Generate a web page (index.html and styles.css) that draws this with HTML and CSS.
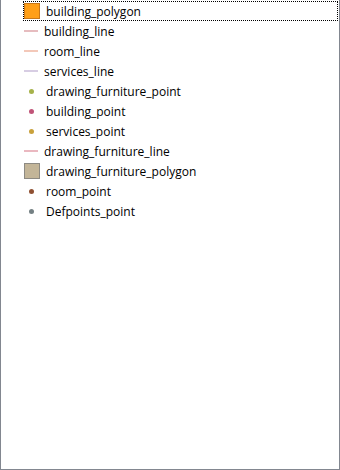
FILE: index.html
```html
<!DOCTYPE html>
<html>
<head>
<meta charset="utf-8">
<link rel="stylesheet" href="styles.css">
</head>
<body>
<div class="panel">
  <ul class="legend">
    <li class="row selected"><span class="icon"><span class="poly poly-building"></span></span><span class="label">building_polygon</span></li>
    <li class="row"><span class="icon line-icon"><span class="line line-building"></span></span><span class="label">building_line</span></li>
    <li class="row"><span class="icon line-icon"><span class="line line-room"></span></span><span class="label">room_line</span></li>
    <li class="row"><span class="icon line-icon"><span class="line line-services"></span></span><span class="label">services_line</span></li>
    <li class="row"><span class="icon"><span class="dot dot-furniture"></span></span><span class="label">drawing_furniture_point</span></li>
    <li class="row"><span class="icon"><span class="dot dot-building"></span></span><span class="label">building_point</span></li>
    <li class="row"><span class="icon"><span class="dot dot-services"></span></span><span class="label">services_point</span></li>
    <li class="row"><span class="icon line-icon"><span class="line line-furniture"></span></span><span class="label">drawing_furniture_line</span></li>
    <li class="row"><span class="icon"><span class="poly poly-furniture"></span></span><span class="label">drawing_furniture_polygon</span></li>
    <li class="row"><span class="icon"><span class="dot dot-room"></span></span><span class="label">room_point</span></li>
    <li class="row"><span class="icon"><span class="dot dot-defpoints"></span></span><span class="label">Defpoints_point</span></li>
  </ul>
</div>
</body>
</html>
```
FILE: styles.css
```css
html, body {
  margin: 0;
  padding: 0;
  background: #ffffff;
}
.panel {
  box-sizing: border-box;
  width: 340px;
  height: 470px;
  border: 1px solid #828790;
  border-top: none;
  padding-top: 1px;
  padding-left: 22px;
  padding-right: 1px;
  font-family: "Segoe UI", "Open Sans", "Noto Sans", sans-serif;
  font-size: 12px;
  color: #000000;
}
.legend {
  list-style: none;
  margin: 0;
  padding: 0;
}
.row {
  box-sizing: border-box;
  height: 20px;
  display: flex;
  align-items: center;
  border: 1px dotted transparent;
}
.row.selected {
  border: 1px dotted #000000;
}
.icon {
  width: 20px;
  height: 16px;
  display: flex;
  align-items: center;
  justify-content: flex-start;
  flex: none;
}
.line-icon {
  width: 18px;
}
.label {
  padding-left: 2px;
  padding-top: 2px;
  white-space: nowrap;
  line-height: 18px;
  color: #000000;
}
.poly {
  box-sizing: border-box;
  width: 16px;
  height: 16px;
  border: 1px solid;
}
.poly-building {
  background: #ff9f18;
  border-color: #c8781a;
}
.poly-furniture {
  background: #c3b598;
  border-color: #8d8a83;
}
.line {
  display: block;
  width: 14px;
  height: 2px;
}
.line-building { background: #e6bcbf; }
.line-room { background: #f3c8b9; }
.line-services { background: #d7cde3; }
.line-furniture { background: #eab8c0; }
.dot {
  width: 5px;
  height: 5px;
  margin-left: 5px;
  border-radius: 50%;
}
.dot-furniture { background: #a6b24a; }
.dot-building { background: #c05478; }
.dot-services { background: #c9a13c; }
.dot-room { background: #8f5032; }
.dot-defpoints { background: #748083; }
```
